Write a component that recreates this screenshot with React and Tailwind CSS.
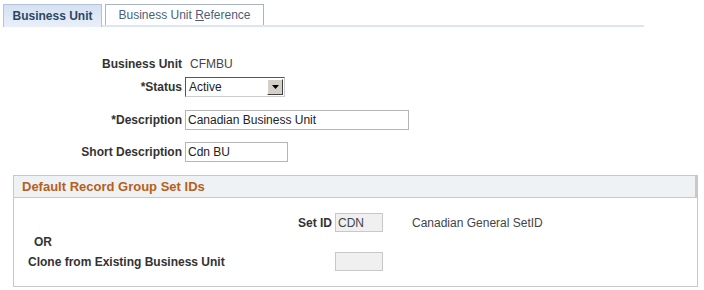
export default function App() {
  const font = { fontFamily: '"Liberation Sans", Arial, sans-serif' };
  return (
    <div className="w-[704px] h-[290px] bg-white text-[12px] text-[#333]" style={font}>
      {/* tabs */}
      <div className="pt-[4px] pl-[3px]">
        <div className="flex w-[641px] border-b-[2px] border-[#dbe6f3] items-end">
          <div className="w-[99px] border border-b-0 border-[#b4c3d6] bg-gradient-to-b from-[#d4e1f1] to-[#e9f0f9] flex items-center justify-center font-bold text-[#2e4666] text-[12px] mb-[-2px] h-[23px]">
            Business Unit
          </div>
          <div className="ml-[3px] h-[21px] w-[159px] border border-b-0 border-[#a8b4c4] bg-white flex items-center justify-center text-[#4b5f7b] text-[12px]">
            <span>Business Unit <span className="underline">R</span>eference</span>
          </div>
        </div>
      </div>

      {/* form */}
      <div className="mt-[29px] flex flex-col">
        <div className="flex items-center h-[16px]">
          <div className="w-[182px] text-right font-bold">Business Unit</div>
          <div className="ml-[8px] text-[#444]">CFMBU</div>
        </div>
        <div className="flex items-center h-[20px] mt-[5px]">
          <div className="w-[182px] text-right font-bold">*Status</div>
          <div className="ml-[3px] w-[100px] h-[20px] border border-[#555] border-r-[#ccc] border-b-[#ccc] bg-white flex items-center">
            <span className="pl-[3px] flex-1 text-[#222]">Active</span>
            <div className="w-[16px] h-[16px] mr-[1px] bg-[#d4d0c8] border border-[#fff] border-r-[#404040] border-b-[#404040] flex items-center justify-center">
              <svg width="7" height="4" viewBox="0 0 7 4"><path d="M0 0h7L3.5 4z" fill="#000" /></svg>
            </div>
          </div>
        </div>
        <div className="flex items-center h-[20px] mt-[13px]">
          <div className="w-[182px] text-right font-bold">*Description</div>
          <div className="ml-[3px] w-[224px] h-[20px] border border-[#b5b5b5] flex items-center pl-[2px] text-[#222]">Canadian Business Unit</div>
        </div>
        <div className="flex items-center h-[20px] mt-[12px]">
          <div className="w-[182px] text-right font-bold">Short Description</div>
          <div className="ml-[3px] w-[103px] h-[20px] border border-[#b5b5b5] flex items-center pl-[2px] text-[#222]">Cdn BU</div>
        </div>
      </div>

      {/* group box */}
      <div className="ml-[13px] mt-[13px] w-[685px] h-[112px] border border-[#c8c8c8]">
        <div className="h-[22px] bg-[#eff2f4] border-b border-[#c8c8c8] border-r-[2px] border-r-[#c8c8c8] flex items-center pl-[8px] font-bold text-[13px] text-[#b5601b]">
          Default Record Group Set IDs
        </div>
        <div className="h-[88px]">
          <div className="flex items-center h-[19px] mt-[15px]">
            <div className="w-[318px] text-right font-bold">Set ID</div>
            <div className="ml-[3px] w-[48px] h-[19px] border border-[#c8c8c8] bg-[#f0f0f0] flex items-center pl-[2px] text-[#444]">CDN</div>
            <div className="ml-[29px] text-[#444]">Canadian General SetID</div>
          </div>
          <div className="h-[14px] mt-[3px] pl-[20px] font-bold flex items-center">OR</div>
          <div className="flex items-center h-[19px] mt-[3px]">
            <div className="w-[308px] pl-[14px] font-bold">Clone from Existing Business Unit</div>
            <div className="ml-[13px] w-[48px] h-[19px] border border-[#c8c8c8] bg-[#f0f0f0]" />
          </div>
        </div>
      </div>
    </div>
  );
}
